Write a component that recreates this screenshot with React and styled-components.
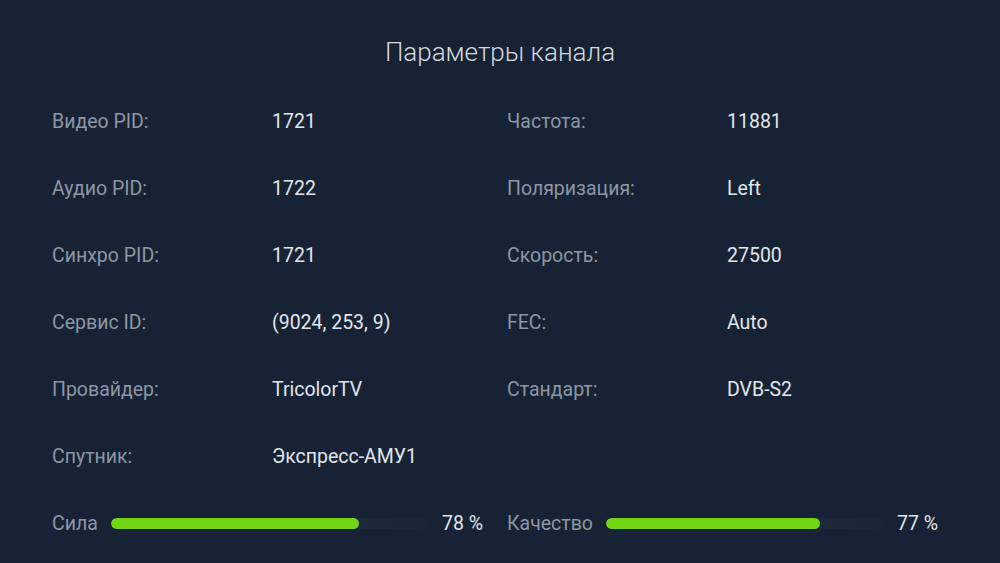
import React from 'react';
import styled, { createGlobalStyle } from 'styled-components';

const GlobalStyle = createGlobalStyle`
    html, body {
        margin: 0;
        padding: 0;
        background: #172234;
    }
    body {
        font-family: Roboto, "Noto Sans", "Liberation Sans", sans-serif;
    }
`;

const params = [
    [['Видео PID:', '1721'], ['Частота:', '11881']],
    [['Аудио PID:', '1722'], ['Поляризация:', 'Left']],
    [['Синхро PID:', '1721'], ['Скорость:', '27500']],
    [['Сервис ID:', '(9024, 253, 9)'], ['FEC:', 'Auto']],
    [['Провайдер:', 'TricolorTV'], ['Стандарт:', 'DVB-S2']],
    [['Спутник:', 'Экспресс-АМУ1'], null],
];

const levels = [
    { label: 'Сила', value: 78 },
    { label: 'Качество', value: 77 },
];

const App = () => {
    return (
        <Screen>
            <GlobalStyle />
            <Title>Параметры канала</Title>
            <Grid>
                {params.map((row, i) => row.map((cell, j) => (
                    <Cell key={`${i}-${j}`}>
                        {cell && <>
                            <Label>{cell[0]}</Label>
                            <Value>{cell[1]}</Value>
                        </>}
                    </Cell>
                )))}
                {levels.map(level => (
                    <Cell key={level.label}>
                        <LevelLabel>{level.label}</LevelLabel>
                        <Track>
                            <Fill style={{ width: `${level.value}%` }} />
                        </Track>
                        <Percent>{level.value} %</Percent>
                    </Cell>
                ))}
            </Grid>
        </Screen>
    );
};

const Screen = styled.div`
    width: 1000px;
    height: 563px;
    box-sizing: border-box;
    padding: 36px 0 0 52px;
    background: #172234;
    overflow: hidden;
`;

const Title = styled.div`
    margin-left: -52px;
    text-align: center;
    font-size: 26px;
    line-height: 32px;
    font-weight: 300;
    color: #d3d9df;
    margin-bottom: 20px;
`;

const Grid = styled.div`
    display: grid;
    grid-template-columns: 455px 430px;
    grid-auto-rows: 67px;
`;

const Cell = styled.div`
    display: flex;
    align-items: center;
    width: 431px;
    font-size: 19.5px;
`;

const Label = styled.div`
    width: 220px;
    flex-shrink: 0;
    color: #8d97a3;
`;

const Value = styled.div`
    color: #e1e6eb;
`;

const LevelLabel = styled.div`
    color: #8d97a3;
    margin-right: 13px;
`;

const Track = styled.div`
    flex: 1;
    height: 11px;
    border-radius: 6px;
    background: linear-gradient(90deg, #1f2b3e 0%, #1f2b3e 70%, rgba(31, 43, 62, 0.3) 100%);
    overflow: hidden;
`;

const Fill = styled.div`
    height: 100%;
    border-radius: 6px;
    background: #71d414;
`;

const Percent = styled.div`
    margin-left: 13px;
    color: #e1e6eb;
`;

export default App;
